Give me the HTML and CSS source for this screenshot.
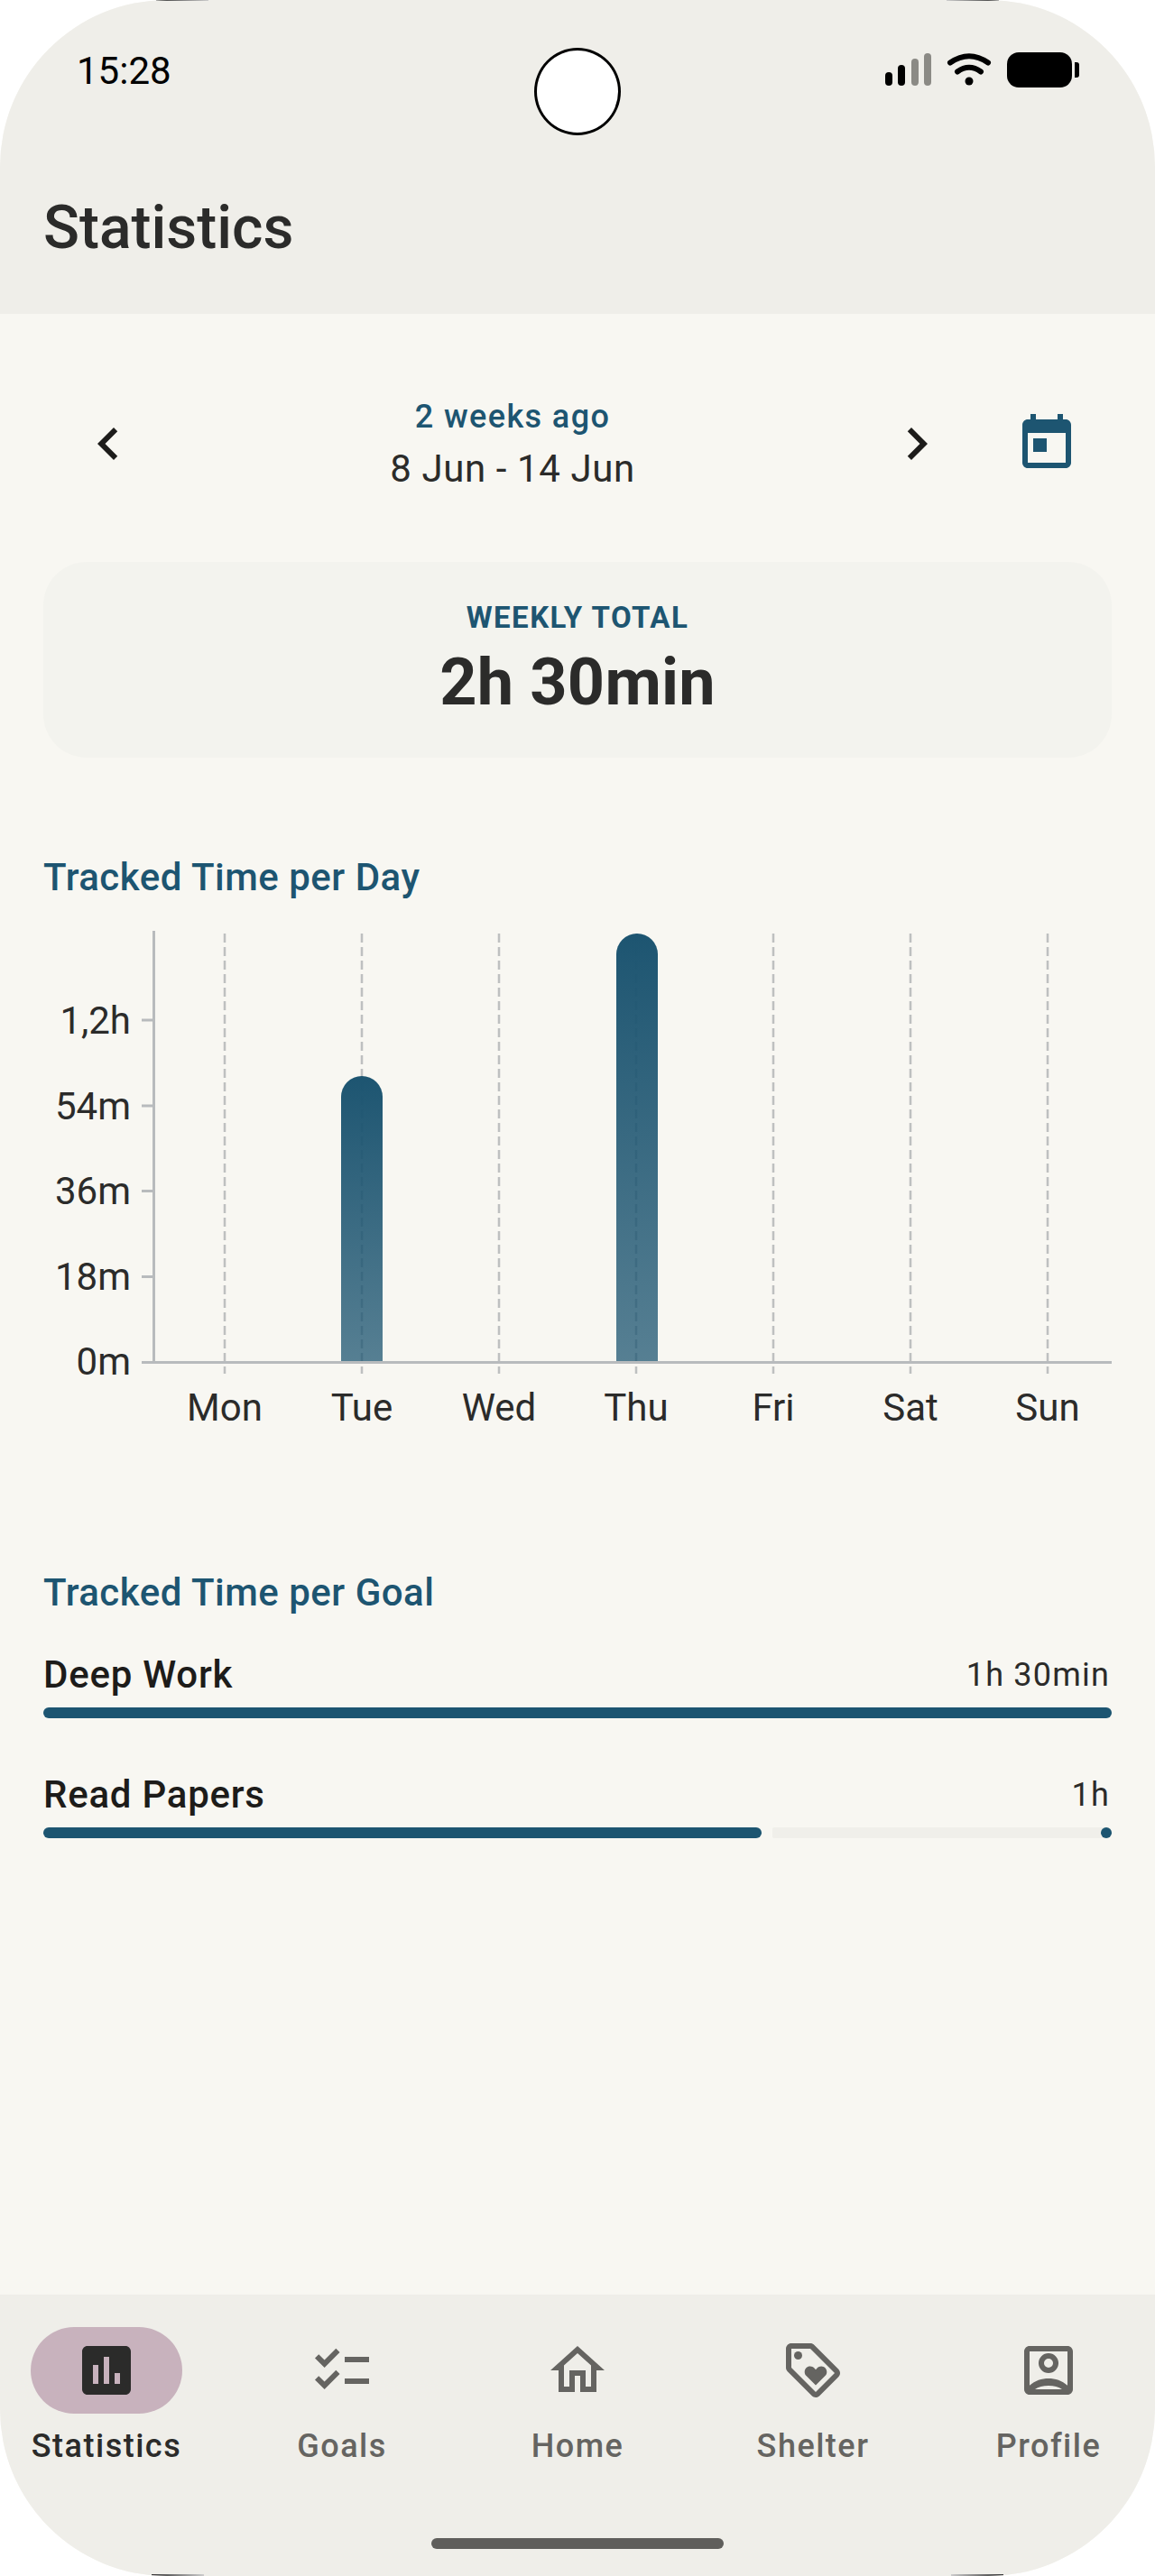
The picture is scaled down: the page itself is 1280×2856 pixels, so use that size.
FILE: index.html
```html
<!DOCTYPE html>
<html>
<head>
    <meta charset="UTF-8">
    <title>Statistics</title>
    <link rel="stylesheet" href="styles.css">
</head>
<body>
<div class="phone">
    <div class="edge edge-tl"></div>
    <div class="edge edge-tr"></div>
    <div class="edge edge-bl"></div>
    <div class="edge edge-br"></div>

    <header class="top">
        <div class="status">
            <span class="clock">15:28</span>
            <div class="camera"></div>
            <svg class="status-icons" width="216" height="40" viewBox="0 0 216 40">
                <rect x="0" y="22" width="8" height="15" rx="4" fill="#000"/>
                <rect x="14" y="14" width="8" height="23" rx="4" fill="#000"/>
                <rect x="29" y="7" width="8" height="30" rx="4" fill="#8b8a85"/>
                <rect x="43" y="1" width="8" height="36" rx="4" fill="#8b8a85"/>
                <path d="M72 11.5Q93 -3 114 11.5" fill="none" stroke="#000" stroke-width="6" stroke-linecap="round"/>
                <path d="M80 21.5Q93 12 106 21.5" fill="none" stroke="#000" stroke-width="6" stroke-linecap="round"/>
                <circle cx="93" cy="32" r="4.5" fill="#000"/>
                <rect x="135" y="0" width="72" height="39" rx="13" fill="#000"/>
                <path d="M210 11h2a3 3 0 0 1 3 3v11a3 3 0 0 1-3 3h-2z" fill="#000"/>
            </svg>
        </div>
        <h1 class="title">Statistics</h1>
    </header>

    <main class="content">
        <div class="week-row">
            <button class="icon-btn">
                <svg width="72" height="72" viewBox="0 0 24 24" fill="#1d1c1a"><path d="M15.41 7.41L14 6l-6 6 6 6 1.41-1.41L10.83 12z"/></svg>
            </button>
            <div class="week-label">
                <div class="week-ago">2 weeks ago</div>
                <div class="week-range">8 Jun - 14 Jun</div>
            </div>
            <button class="icon-btn">
                <svg width="72" height="72" viewBox="0 0 24 24" fill="#1d1c1a"><path d="M10 6L8.59 7.41 13.17 12l-4.58 4.59L10 18l6-6z"/></svg>
            </button>
            <button class="icon-btn">
                <svg width="72" height="72" viewBox="0 0 24 24" fill="#1d5571"><path d="M19 3h-1V1h-2v2H8V1H6v2H5c-1.11 0-1.99.9-1.99 2L3 19c0 1.1.89 2 2 2h14c1.1 0 2-.9 2-2V5c0-1.1-.9-2-2-2zm0 16H5V8h14v11zM7 10h5v5H7z"/></svg>
            </button>
        </div>

        <div class="total-card">
            <div class="total-label">WEEKLY TOTAL</div>
            <div class="total-value">2h 30min</div>
        </div>

        <h2 class="section-title day-title">Tracked Time per Day</h2>

        <!-- chart: y axis at x=170, baseline at y=510, one column is 152 wide -->
        <svg class="chart" width="1280" height="600" viewBox="0 0 1280 600">
            <defs>
                <linearGradient id="barFill" x1="0" y1="0" x2="0" y2="1">
                    <stop offset="0" stop-color="#1d5571"/>
                    <stop offset="1" stop-color="#1d5571" stop-opacity="0.74"/>
                </linearGradient>
            </defs>
            <g class="grid">
                <line x1="249" y1="35" x2="249" y2="523"/>
                <line x1="401" y1="35" x2="401" y2="523"/>
                <line x1="553" y1="35" x2="553" y2="523"/>
                <line x1="705" y1="35" x2="705" y2="523"/>
                <line x1="857" y1="35" x2="857" y2="523"/>
                <line x1="1009" y1="35" x2="1009" y2="523"/>
                <line x1="1161" y1="35" x2="1161" y2="523"/>
            </g>
            <path d="M378 509V216a23 23 0 0 1 46 0V509z" fill="url(#barFill)"/>
            <path d="M683 509V58a23 23 0 0 1 46 0V509z" fill="url(#barFill)"/>
            <g class="axis">
                <line x1="170.5" y1="32" x2="170.5" y2="511"/>
                <line x1="157" y1="510.500" x2="1232" y2="510.500"/>
                <line x1="157" y1="131" x2="170" y2="131"/>
                <line x1="157" y1="226" x2="170" y2="226"/>
                <line x1="157" y1="320.500" x2="170" y2="320.500"/>
                <line x1="157" y1="415.500" x2="170" y2="415.500"/>
            </g>
            <g class="y-labels">
                <text x="145" y="146">1,2h</text>
                <text x="145" y="241">54m</text>
                <text x="145" y="335">36m</text>
                <text x="145" y="430">18m</text>
                <text x="145" y="524">0m</text>
            </g>
            <g class="x-labels">
                <text x="249" y="575">Mon</text>
                <text x="401" y="575">Tue</text>
                <text x="553" y="575">Wed</text>
                <text x="705" y="575">Thu</text>
                <text x="857" y="575">Fri</text>
                <text x="1009" y="575">Sat</text>
                <text x="1161" y="575">Sun</text>
            </g>
        </svg>

        <h2 class="section-title goal-title">Tracked Time per Goal</h2>

        <div class="goal">
            <div class="goal-head">
                <span class="goal-name">Deep Work</span>
                <span class="goal-time">1h 30min</span>
            </div>
            <div class="progress">
                <div class="progress-fill" style="width: 100%"></div>
            </div>
        </div>
        <div class="goal">
            <div class="goal-head">
                <span class="goal-name">Read Papers</span>
                <span class="goal-time">1h</span>
            </div>
            <div class="progress">
                <div class="progress-fill" style="width: 67.2%"></div>
                <div class="progress-track"></div>
                <div class="progress-stop"></div>
            </div>
        </div>
    </main>

    <nav class="bottom-nav">
        <div class="nav-items">
            <div class="nav-item active">
                <div class="nav-pill">
                    <svg width="72" height="72" viewBox="0 0 24 24" fill="currentColor"><path d="M19 3H5c-1.1 0-2 .9-2 2v14c0 1.1.9 2 2 2h14c1.1 0 2-.9 2-2V5c0-1.1-.9-2-2-2zM9 17H7v-7h2v7zm4 0h-2V7h2v10zm4 0h-2v-4h2v4z"/></svg>
                </div>
                <span class="nav-label">Statistics</span>
            </div>
            <div class="nav-item">
                <div class="nav-pill">
                    <svg width="72" height="72" viewBox="0 0 24 24" fill="currentColor"><path d="M22 7h-9v2h9V7zm0 8h-9v2h9v-2zM5.540 11L2 7.460l1.410-1.410 2.120 2.120 4.240-4.240 1.410 1.410L5.540 11zm0 8L2 15.460l1.410-1.410 2.120 2.120 4.240-4.240 1.410 1.410L5.540 19z"/></svg>
                </div>
                <span class="nav-label">Goals</span>
            </div>
            <div class="nav-item">
                <div class="nav-pill">
                    <svg width="72" height="72" viewBox="0 0 24 24" fill="currentColor"><path d="M12 5.690l5 4.500V18h-2v-6H9v6H7v-7.810l5-4.500M12 3L2 12h3v8h6v-6h2v6h6v-8h3L12 3z"/></svg>
                </div>
                <span class="nav-label">Home</span>
            </div>
            <div class="nav-item">
                <div class="nav-pill">
                    <svg width="72" height="72" viewBox="0 0 24 24" fill="currentColor"><path d="M21.410 11.580l-9-9C12.050 2.220 11.550 2 11 2H4c-1.100 0-2 .9-2 2v7c0 .55.22 1.050.59 1.420l9 9c.36.36.86.58 1.410.58s1.050-.22 1.410-.59l7-7c.37-.36.59-.86.59-1.410s-.23-1.060-.59-1.420zM13 20.010L4 11V4h7v-.01l9 9-7 7.020z"/><circle cx="6.500" cy="6.500" r="1.500"/><path d="M8.900 12.550c0 .57.23 1.070.6 1.450l3.500 3.500 3.500-3.500c.37-.37.6-.89.6-1.450 0-1.130-.92-2.050-2.050-2.050-.57 0-1.080.23-1.450.61l-.6.6-.6-.59c-.37-.38-.89-.61-1.450-.61-1.130-.01-2.050.91-2.050 2.040z"/></svg>
                </div>
                <span class="nav-label">Shelter</span>
            </div>
            <div class="nav-item">
                <div class="nav-pill">
                    <svg width="72" height="72" viewBox="0 0 24 24" fill="currentColor" fill-rule="evenodd"><path d="M19 3H5c-1.100 0-2 .9-2 2v14c0 1.100.9 2 2 2h14c1.100 0 2-.9 2-2V5c0-1.100-.9-2-2-2zm0 2v14H5V5z"/><path d="M12 5.660a3.670 3.670 0 1 0 0 7.340a3.670 3.670 0 1 0 0-7.340zm0 2a1.670 1.670 0 1 1 0 3.340a1.670 1.670 0 1 1 0-3.340z"/><path d="M5 17.600C7 15.800 9.500 15 12 15s5 .8 7 2.600V19h-2c-1.200-.9-3-1.330-5-1.330S8.200 18.100 7 19H5z"/></svg>
                </div>
                <span class="nav-label">Profile</span>
            </div>
        </div>
        <div class="home-bar"></div>
    </nav>
</div>
</body>
</html>
```

FILE: styles.css
```css
* {
    box-sizing: border-box;
}
body {
    margin: 0;
    background-color: #fff;
    font-family: Roboto, sans-serif;
    color: #2b2b2a;
}
.phone {
    position: relative;
    width: 1280px;
    height: 2856px;
    border-radius: 185px;
    overflow: hidden;
    display: flex;
    flex-direction: column;
    background-color: #f8f7f2;
}

/* little dark slivers where the device frame shows at the corners */
.edge {
    position: absolute;
    width: 58px;
    height: 1px;
    z-index: 2;
}
.edge-tl {
    top: 0;
    left: 173px;
    background: linear-gradient(to right, #333, #ccc);
}
.edge-tr {
    top: 0;
    right: 173px;
    background: linear-gradient(to left, #333, #ccc);
}
.edge-bl {
    bottom: 0;
    left: 168px;
    height: 2px;
    background: linear-gradient(to right, #333, #ccc);
}
.edge-br {
    bottom: 0;
    right: 168px;
    height: 2px;
    background: linear-gradient(to left, #333, #ccc);
}

/* top bar */
.top {
    height: 348px;
    background-color: #efeee9;
    padding: 0 48px;
}
.status {
    position: relative;
    height: 207px;
    padding-top: 55px;
}
.clock {
    display: block;
    margin-left: 37px;
    font-size: 42px;
    line-height: 48px;
    color: #000;
}
.camera {
    position: absolute;
    left: 544px;
    top: 53px;
    width: 96px;
    height: 97px;
    border: 3px solid #000;
    border-radius: 50%;
    background-color: #fff;
}
.status-icons {
    position: absolute;
    left: 933px;
    top: 58px;
}
.title {
    margin: 0;
    font-size: 66px;
    line-height: 92px;
    font-weight: 500;
    color: #2b2b2a;
}

/* week picker */
.content {
    flex: 1;
    padding: 72px 48px 0;
}
.week-row {
    display: flex;
    height: 144px;
    align-items: center;
}
.icon-btn {
    width: 144px;
    height: 144px;
    padding: 0;
    border: none;
    background: none;
    display: flex;
    align-items: center;
    justify-content: center;
}
.week-label {
    flex: 1;
    text-align: center;
}
.week-ago {
    font-size: 36px;
    line-height: 56px;
    font-weight: 500;
    letter-spacing: 1.4px;
    color: #1d5571;
}
.week-range {
    font-size: 42px;
    line-height: 60px;
    letter-spacing: 0.6px;
    color: #2b2b2a;
}

/* weekly total */
.total-card {
    margin-top: 59px;
    height: 217px;
    border-radius: 48px;
    background-color: #f3f3ee;
    text-align: center;
    padding-top: 38px;
}
.total-label {
    font-size: 33px;
    line-height: 48px;
    font-weight: 700;
    letter-spacing: 1.5px;
    color: #1d5571;
}
.total-value {
    font-size: 72px;
    line-height: 96px;
    font-weight: 700;
    letter-spacing: 0.2px;
    color: #2b2b2a;
}

.section-title {
    margin: 0;
    font-size: 42px;
    line-height: 60px;
    font-weight: 500;
    letter-spacing: 0.5px;
    color: #1d5571;
}
.day-title {
    margin-top: 103px;
}

/* chart */
.chart {
    display: block;
    margin: -3px 0 0 -48px;
}
.grid line {
    stroke: #595e66;
    stroke-opacity: 0.36;
    stroke-width: 2.5;
    stroke-dasharray: 10 5;
}
.axis line {
    stroke: #b8bbbd;
    stroke-width: 3;
}
.y-labels text,
.x-labels text {
    font-family: Roboto, sans-serif;
    font-size: 42px;
    fill: #2b2b2a;
}
.y-labels text {
    text-anchor: end;
}
.x-labels text {
    text-anchor: middle;
}

/* goals */
.goal-title {
    margin-top: 136px;
}
.goal {
    margin-top: 31px;
}
.goal + .goal {
    margin-top: 55px;
}
.goal-head {
    display: flex;
    justify-content: space-between;
    align-items: flex-start;
    height: 60px;
}
.goal-name {
    font-size: 42px;
    line-height: 60px;
    font-weight: 500;
    letter-spacing: 0.75px;
    color: #1d1c1a;
}
.goal-time {
    padding-right: 2px;
    font-size: 36px;
    line-height: 60px;
    letter-spacing: 1.2px;
    color: #2b2b2a;
}
.progress {
    display: flex;
    position: relative;
    height: 12px;
    margin-top: 6px;
}
.progress-fill {
    height: 12px;
    border-radius: 6px;
    background-color: #1d5571;
}
.progress-track {
    flex: 1;
    margin-left: 12px;
    height: 12px;
    border-radius: 2px 6px 6px 2px;
    background-color: #f0efea;
}
.progress-stop {
    position: absolute;
    right: 0;
    top: 0;
    width: 12px;
    height: 12px;
    border-radius: 50%;
    background-color: #1d5571;
}

/* bottom navigation */
.bottom-nav {
    height: 312px;
    background-color: #efeee9;
    padding-top: 36px;
}
.nav-items {
    display: flex;
    justify-content: space-between;
    padding: 0 34px;
}
.nav-item {
    width: 168px;
    display: flex;
    flex-direction: column;
    align-items: center;
    color: #656461;
}
.nav-item.active {
    color: #2b2b2a;
}
.nav-pill {
    width: 168px;
    height: 96px;
    border-radius: 48px;
    display: flex;
    align-items: center;
    justify-content: center;
}
.nav-item.active .nav-pill {
    background-color: #c8b2bd;
}
.nav-label {
    margin-top: 12px;
    font-size: 36px;
    line-height: 48px;
    font-weight: 500;
    letter-spacing: 1.5px;
    white-space: nowrap;
}
.home-bar {
    width: 324px;
    height: 12px;
    margin: 78px auto 0;
    border-radius: 6px;
    background-color: #5f5e5b;
}
```
